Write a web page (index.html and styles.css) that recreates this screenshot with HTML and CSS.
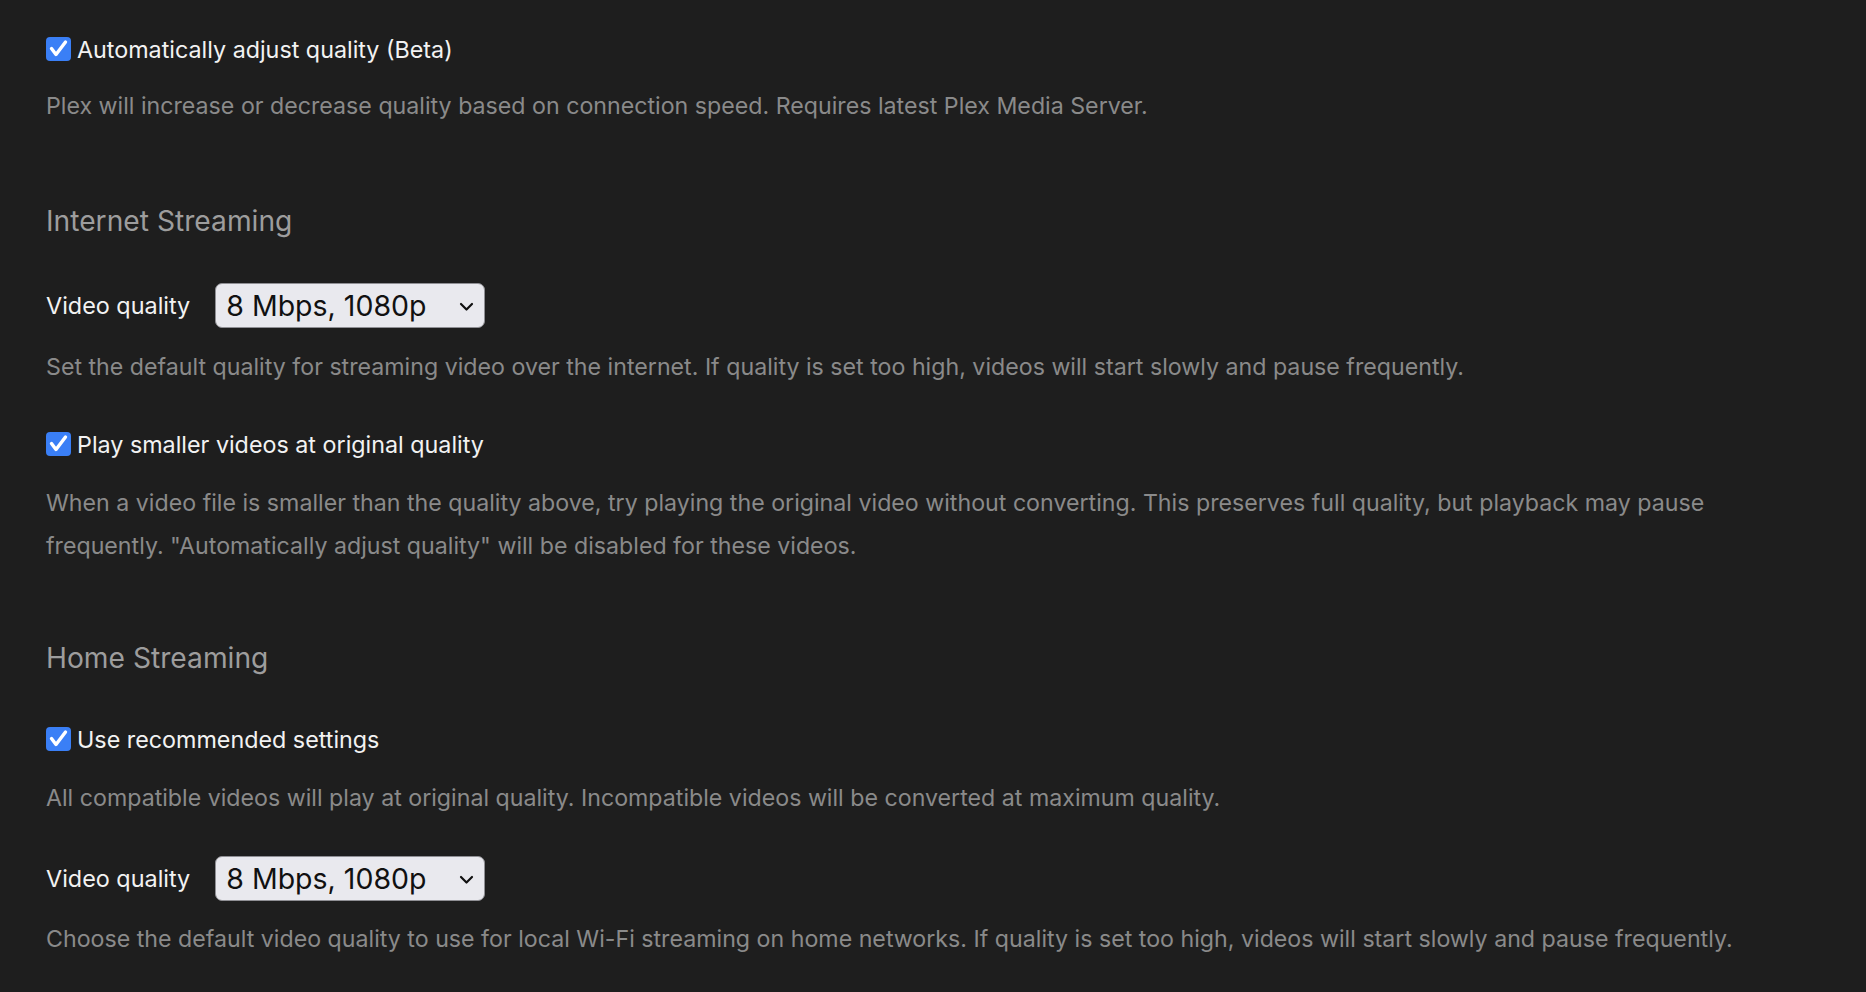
FILE: index.html
```
<!DOCTYPE html>
<html>
<head>
<meta charset="utf-8">
<link rel="stylesheet" href="styles.css">
</head>
<body>
<div class="page">
  <label class="check-row first">
    <span class="box"><svg viewBox="0 0 25 24" width="25" height="24"><path d="M5.5 11.5 L10 17.5 L19.5 5" fill="none" stroke="#fff" stroke-width="3.4" stroke-linecap="round" stroke-linejoin="round"/></svg></span>
    <span class="check-label">Automatically adjust quality (Beta)</span>
  </label>
  <p class="desc d1">Plex will increase or decrease quality based on connection speed. Requires latest Plex Media Server.</p>

  <h2 class="heading h1">Internet Streaming</h2>
  <div class="select-row s1">
    <span class="select-label">Video quality</span>
    <div class="select"><span class="select-value">8 Mbps, 1080p</span><svg class="chev" viewBox="0 0 15 10" width="15" height="10"><path d="M2 2 L7.5 7.5 L13 2" fill="none" stroke="#111" stroke-width="2.2" stroke-linecap="round" stroke-linejoin="round"/></svg></div>
  </div>
  <p class="desc d2">Set the default quality for streaming video over the internet. If quality is set too high, videos will start slowly and pause frequently.</p>

  <label class="check-row c2">
    <span class="box"><svg viewBox="0 0 25 24" width="25" height="24"><path d="M5.5 11.5 L10 17.5 L19.5 5" fill="none" stroke="#fff" stroke-width="3.4" stroke-linecap="round" stroke-linejoin="round"/></svg></span>
    <span class="check-label">Play smaller videos at original quality</span>
  </label>
  <p class="desc d3">When a video file is smaller than the quality above, try playing the original video without converting. This preserves full quality, but playback may pause<br>frequently. "Automatically adjust quality" will be disabled for these videos.</p>

  <h2 class="heading h2">Home Streaming</h2>
  <label class="check-row c3">
    <span class="box"><svg viewBox="0 0 25 24" width="25" height="24"><path d="M5.5 11.5 L10 17.5 L19.5 5" fill="none" stroke="#fff" stroke-width="3.4" stroke-linecap="round" stroke-linejoin="round"/></svg></span>
    <span class="check-label">Use recommended settings</span>
  </label>
  <p class="desc d4">All compatible videos will play at original quality. Incompatible videos will be converted at maximum quality.</p>

  <div class="select-row s2">
    <span class="select-label">Video quality</span>
    <div class="select"><span class="select-value">8 Mbps, 1080p</span><svg class="chev" viewBox="0 0 15 10" width="15" height="10"><path d="M2 2 L7.5 7.5 L13 2" fill="none" stroke="#111" stroke-width="2.2" stroke-linecap="round" stroke-linejoin="round"/></svg></div>
  </div>
  <p class="desc d5">Choose the default video quality to use for local Wi-Fi streaming on home networks. If quality is set too high, videos will start slowly and pause frequently.</p>
</div>
</body>
</html>
```
FILE: styles.css
```
html, body {
  margin: 0;
  padding: 0;
  background: #1e1e1e;
}
body {
  font-family: Inter, "Liberation Sans", Arial, sans-serif;
  height: 992px;
  overflow: hidden;
}
.page {
  padding-left: 46px;
  padding-top: 1px;
}
.check-row {
  display: flex;
  align-items: center;
  height: 26px;
  gap: 6px;
}
.box {
  width: 25px;
  height: 24px;
  border-radius: 4px;
  background: #3a7ff6;
  display: flex;
  align-items: center;
  justify-content: center;
}
.box svg { display: block; }
.check-label {
  color: #f2f2f2;
  font-size: 23.3px;
}
.desc {
  margin: 0;
  color: #8a8a8a;
  font-size: 23.2px;
  line-height: 43px;
}
.heading {
  margin: 0;
  color: #9d9d9d;
  font-size: 28.2px;
  font-weight: 400;
  line-height: 36px;
}
.select-row {
  display: flex;
  align-items: center;
  gap: 25px;
  height: 45px;
}
.select-label {
  color: #f2f2f2;
  font-size: 23.4px;
}
.select {
  box-sizing: border-box;
  width: 270px;
  height: 45px;
  background: #e9e9ee;
  border: 1px solid #8f8f94;
  border-radius: 7px;
  display: flex;
  align-items: center;
  padding-left: 10px;
  padding-right: 10px;
}
.select-value {
  flex: 1;
  color: #111;
  font-size: 28.5px;
}
.chev { display: block; margin-top: 2px; }

.first { margin-top: 35px; }
.d1 { margin-top: 23px; }
.h1 { margin-top: 75px; }
.s1 { margin-top: 44px; }
.d2 { margin-top: 18px; }
.c2 { margin-top: 42px; }
.d3 { margin-top: 25px; }
.h2 { margin-top: 72px; }
.c3 { margin-top: 50px; }
.d4 { margin-top: 25px; }
.s2 { margin-top: 36px; }
.d5 { margin-top: 17px; }
```
